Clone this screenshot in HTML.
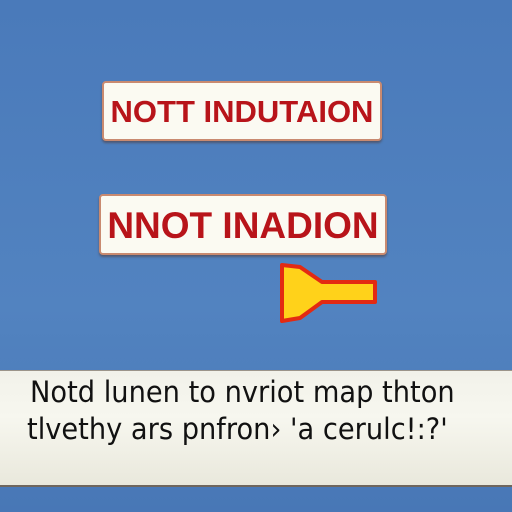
<!DOCTYPE html>
<html><head><style>
html,body{margin:0;padding:0;width:512px;height:512px;overflow:hidden}
body{background:linear-gradient(#4a7aba,#5283c0 60%,#4877b6);position:relative;font-family:"Liberation Sans",sans-serif}
.box{position:absolute;background:#fbfaf2;border:2px solid #c98a70;border-radius:4px;box-shadow:0 2px 2px rgba(80,50,40,.5);color:#b8141a;font-weight:bold;text-align:center;white-space:nowrap}
.scroll{position:absolute;left:0;top:370px;width:512px;height:114px;background:linear-gradient(#f2f2ea,#f7f7ef 40%,#e9e8dc);border-top:1px solid #9c958a;border-bottom:2px solid #6f665d;font-family:"DejaVu Sans",sans-serif;color:#111;font-size:29px;line-height:36px}
</style></head><body>
<div class="box" style="left:102px;top:81px;width:276px;height:56px;line-height:58px;font-size:31px;letter-spacing:0px">NOTT INDUTAION</div>
<div class="box" style="left:99px;top:194px;width:284px;height:57px;line-height:60px;font-size:37px;letter-spacing:0px">NNOT INADION</div>
<svg style="position:absolute;left:278px;top:262px" width="102" height="64">
<path d="M4 3 L22 5 L44 20 L97 20 L97 40 L44 40 L22 56 L4 59 Z" fill="#ffd21a" stroke="#e32a12" stroke-width="4" stroke-linejoin="round"/>
</svg>
<div class="scroll"><div style="position:absolute;left:30px;top:3px;transform:scaleX(.94);transform-origin:left">Notd lunen to nvriot map thton</div>
<div style="position:absolute;left:27px;top:40px;transform:scaleX(.94);transform-origin:left">tlvethy ars pnfron› 'a cerulc!:?'</div></div>
</body></html>
